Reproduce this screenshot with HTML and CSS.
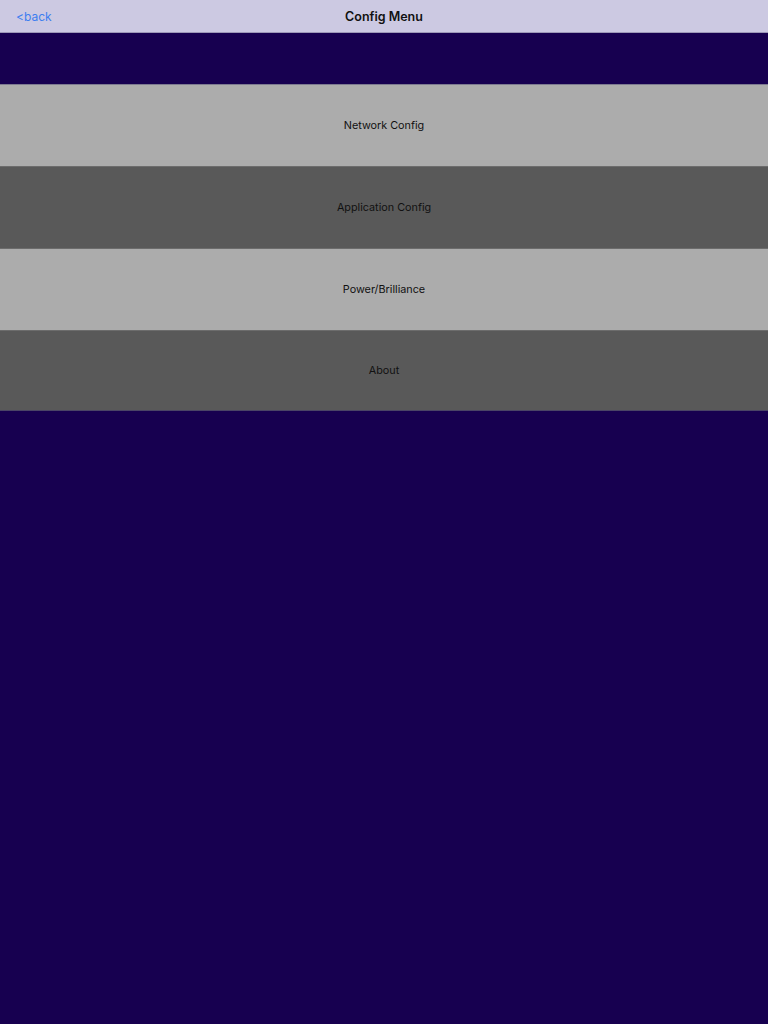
FILE: index.html
```html
<!DOCTYPE html>
<html lang="en">
<head>
<meta charset="utf-8">
<title>Config Menu</title>
<link rel="stylesheet" href="styles.css">
</head>
<body>
<header class="navbar">
  <a class="back" href="#">&lt;back</a>
  <h1 class="title">Config Menu</h1>
</header>
<main class="content">
  <nav class="menu">
    <a class="item light" href="#">Network Config</a>
    <a class="item dark" href="#">Application Config</a>
    <a class="item light" href="#">Power/Brilliance</a>
    <a class="item dark" href="#">About</a>
  </nav>
</main>
</body>
</html>
```
FILE: styles.css
```css
html, body {
  margin: 0;
  padding: 0;
  height: 100%;
}
body {
  background: #170050;
  font-family: Inter, "Noto Sans", "Liberation Sans", sans-serif;
  display: flex;
  flex-direction: column;
}
.navbar {
  height: 33px;
  box-sizing: border-box;
  background: #ccc9e2;
  border-bottom: 1px solid #9d99b8;
  display: grid;
  grid-template-columns: 1fr auto 1fr;
  align-items: center;
  padding: 0 16px;
}
.back {
  color: #3d7ef0;
  text-decoration: none;
  font-size: 12px;
  justify-self: start;
}
.title {
  margin: 0;
  font-size: 12.5px;
  font-weight: 600;
  color: #111;
  grid-column: 2;
}
.content {
  padding-top: 51px;
}
.menu {
  display: flex;
  flex-direction: column;
}
.item {
  height: 82px;
  box-sizing: border-box;
  display: flex;
  align-items: center;
  justify-content: center;
  font-size: 10.8px;
  color: #111;
  text-decoration: none;
}
.item.light {
  background: #acacac;
}
.item.dark {
  background: #595959;
}
.item + .item {
  border-top: 1px solid #6c6c6c;
}
.item:last-child {
  height: 81px;
  border-bottom: 1px solid #4a4466;
}
.menu .item:first-child {
  border-top: 1px solid #7d7a90;
}
```
